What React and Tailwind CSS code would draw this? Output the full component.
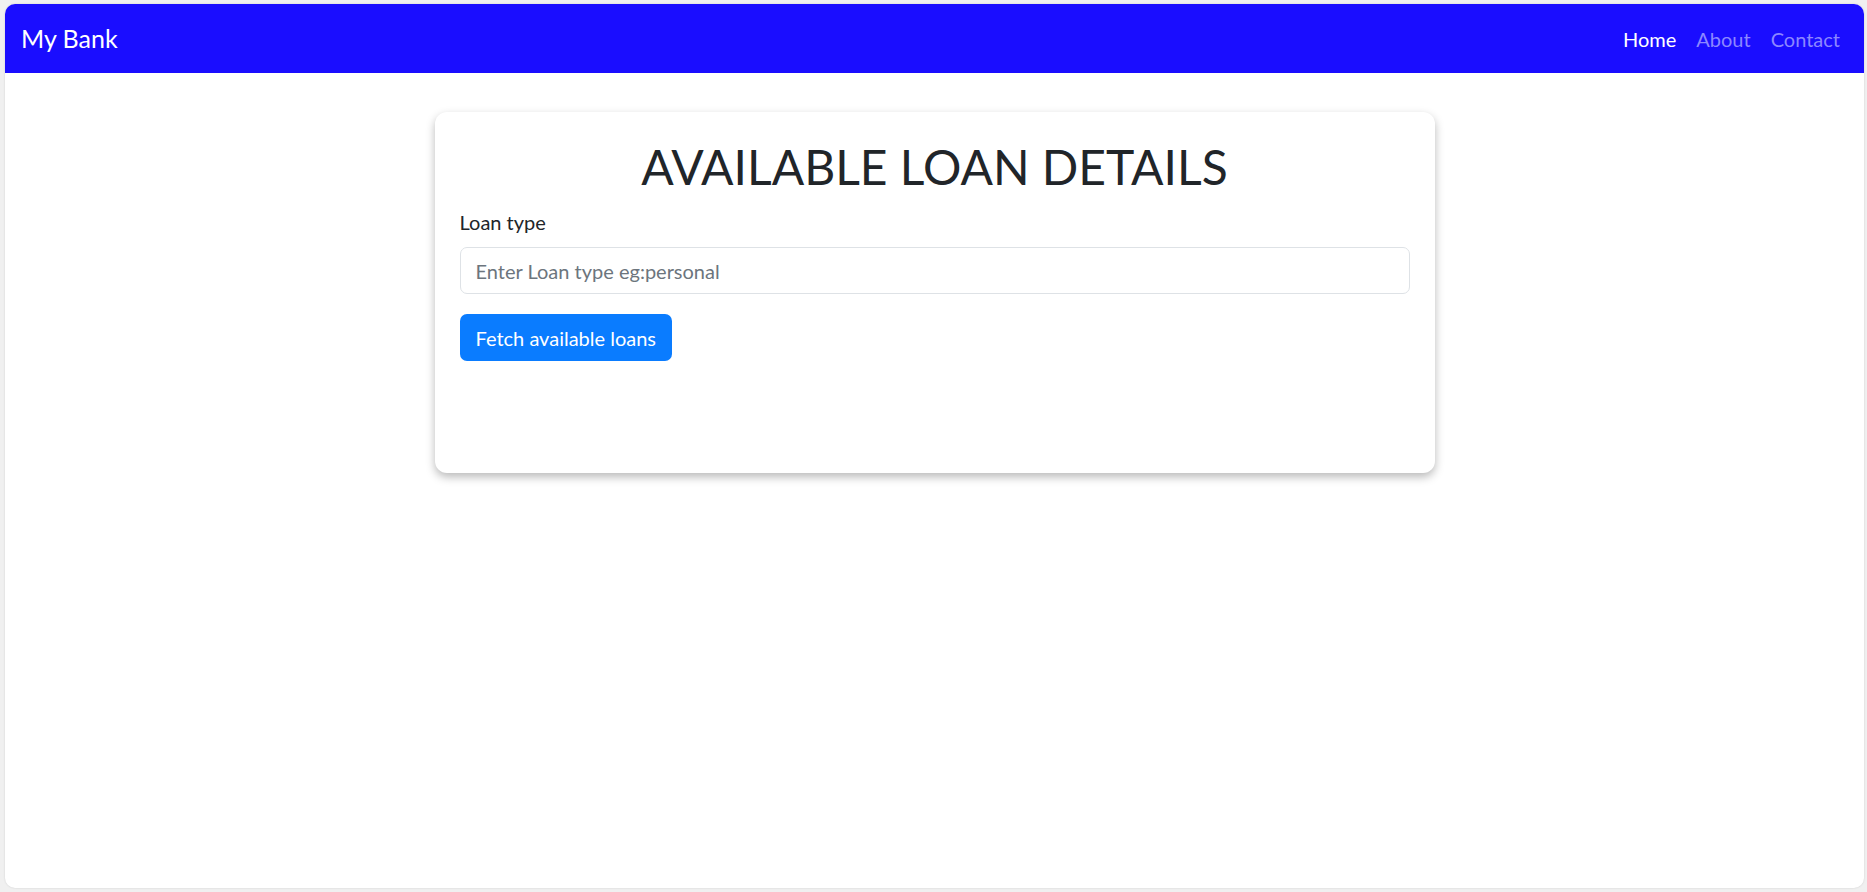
import React, { useState } from "react";

const bodyFont = { fontFamily: '"Segoe UI", Lato, "Noto Sans", sans-serif' };

function NavBar() {
  const links = ["Home", "About", "Contact"];
  return (
    <nav className="h-[69px] bg-[#1a0dff] flex items-center justify-between pl-[16px] pr-[14px]">
      <a href="#" className="text-[25px] text-white leading-none">
        My Bank
      </a>
      <ul className="flex items-center">
        {links.map((l, i) => (
          <li key={l}>
            <a
              href="#"
              className={`block px-[10px] text-[20px] ${
                i === 0 ? "text-white" : "text-[#8c87ff]"
              }`}
            >
              {l}
            </a>
          </li>
        ))}
      </ul>
    </nav>
  );
}

export default function App() {
  const [loanType, setLoanType] = useState("");

  return (
    <div className="min-h-screen bg-[#f0f0f0] pt-[4px] pl-[5px] pr-[3px] pb-[4px]" style={bodyFont}>
      <div className="h-[884px] bg-white rounded-[10px] overflow-hidden shadow-[0_0_2px_rgba(0,0,0,0.15)]">
        <NavBar />

        {/* tarjeta principal */}
        <main className="flex justify-center pt-[39px]">
          <div className="w-[1000px] h-[361px] bg-white rounded-[12px] p-[25px] shadow-[0_4px_10px_rgba(0,0,0,0.28)]">
            <h1
              className="text-center text-[#212529] text-[48px] leading-[60px] mb-[10px]"
              style={{ fontFamily: '"Gill Sans", Lato, sans-serif' }}
            >
              AVAILABLE LOAN DETAILS
            </h1>

            <label className="block text-[20px] leading-[30px] text-[#212529] mb-[10px]">
              Loan type
            </label>
            <input
              type="text"
              value={loanType}
              onChange={(e) => setLoanType(e.target.value)}
              placeholder="Enter Loan type eg:personal"
              className="block w-full h-[47px] px-[15px] text-[20px] text-[#212529] placeholder:text-[#6c757d] border border-[#dee2e6] rounded-[7px] outline-none mb-[20px]"
            />

            <button className="h-[47px] px-[16px] rounded-[7px] bg-[#0a7cff] text-white text-[20px]">
              Fetch available loans
            </button>
          </div>
        </main>
      </div>
    </div>
  );
}
